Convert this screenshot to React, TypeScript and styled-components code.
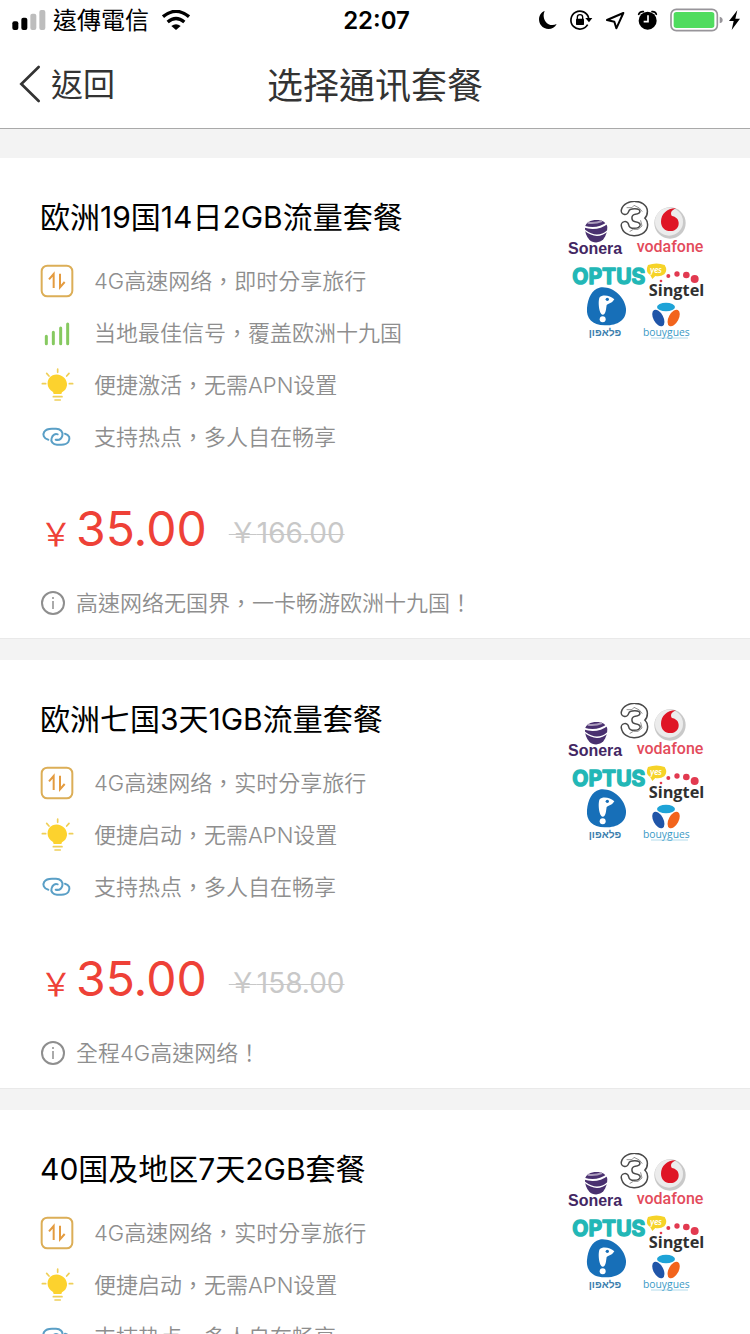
import React from 'react';
import styled, { createGlobalStyle } from 'styled-components';

const GlobalStyle = createGlobalStyle`
  * { box-sizing: border-box; }
  body {
    margin: 0;
    background: #f3f3f3;
    font-family: Inter, "Noto Sans CJK TC", "Noto Sans CJK SC", sans-serif;
  }
  button { font: inherit; color: inherit; }
`;

const Screen = styled.div`
  display: flex;
  flex-direction: column;
  height: 100vh;
`;

const StatusBar = styled.div`
  display: grid;
  grid-template-columns: 1fr auto 1fr;
  align-items: center;
  height: 40px;
  padding: 0 9px 0 12px;
  background: #fff;
  color: #000;
`;

const StatusGroup = styled.div<{ $end?: boolean }>`
  display: flex;
  align-items: center;
  justify-content: ${(p) => (p.$end ? 'flex-end' : 'flex-start')};
  gap: ${(p) => (p.$end ? 12 : 7)}px;
`;

const Carrier = styled.span`
  margin-right: 6px;
  padding-top: 2px;
  font-size: 24px;
  line-height: 38px;
`;

const Clock = styled.time`
  padding-top: 2px;
  font-size: 24px;
  font-weight: 600;
  line-height: 38px;
`;

const Power = styled.div`
  display: flex;
  align-items: center;
  gap: 4px;
`;

const NavBar = styled.header`
  display: grid;
  grid-template-columns: 1fr auto 1fr;
  align-items: center;
  height: 89px;
  padding: 0 19px;
  border-bottom: 1px solid #a9a9a9;
  background: #fff;
  color: #333;
`;

const BackButton = styled.button`
  display: flex;
  align-items: center;
  justify-self: start;
  gap: 9px;
  padding: 0;
  border: 0;
  background: none;
  font-size: 32px;
  line-height: 48px;
`;

const BackLabel = styled.span`
  padding-top: 2px;
`;

const PageTitle = styled.h1`
  margin: 0;
  padding-top: 4px;
  font-size: 36px;
  font-weight: 400;
  line-height: 52px;
`;

const PlanList = styled.main`
  display: flex;
  flex: 1;
  flex-direction: column;
  gap: 22px;
  min-height: 0;
  padding-top: 29px;
  overflow-y: auto;
  scrollbar-width: none;
`;

const Card = styled.article`
  display: flex;
  flex-shrink: 0;
  align-items: flex-start;
  justify-content: space-between;
  padding: 36px 44px 18px 40px;
  background: #fff;
  box-shadow: 0 1px 0 #e9e9e9;
`;

const CardBody = styled.div`
  flex: 1;
  min-width: 0;
`;

const CardTitle = styled.h2`
  margin: 0 0 15px;
  color: #000;
  font-size: 30px;
  font-weight: 400;
  line-height: 46px;
`;

const FeatureList = styled.ul`
  margin: 0;
  padding: 0;
  list-style: none;
`;

const Feature = styled.li`
  display: flex;
  align-items: center;
  gap: 20px;
  height: 52px;
`;

const DetailText = styled.span`
  padding-bottom: 4px;
  color: #8e8e8e;
  font-size: 22px;
  font-weight: 350;
`;

const PriceRow = styled.div`
  display: flex;
  align-items: center;
  gap: 22px;
  height: 64px;
  margin-top: 37px;
`;

const Price = styled.span`
  display: flex;
  align-items: baseline;
  gap: 4px;
  color: #ee4137;
  font-size: 48px;
  line-height: 64px;
`;

const Currency = styled.span`
  font-size: 32px;
`;

const OldPrice = styled.del`
  padding-top: 2px;
  color: #c8c8c8;
  font-size: 28px;
  line-height: 40px;
  text-decoration-thickness: 1px;
`;

const Note = styled.p`
  display: flex;
  align-items: center;
  gap: 11px;
  height: 34px;
  margin: 22px 0 0;
`;

const Partners = styled.svg`
  flex: none;
  margin-top: 7px;
`;

const SignalIcon = () => (
  <svg width="34" height="20" viewBox="35 30 102 60" aria-hidden="true">
    <rect x="36" y="64" width="18" height="26" rx="6" />
    <rect x="63" y="53" width="18" height="37" rx="6" />
    <rect x="90" y="41" width="18" height="49" rx="6" fill="#bdbdbd" />
    <rect x="117" y="30" width="18" height="60" rx="6" fill="#bdbdbd" />
  </svg>
);

const WifiIcon = () => (
  <svg width="28" height="20" viewBox="489 30 84 60" aria-hidden="true">
    <g fill="none" stroke="#000" strokeWidth="10">
      <path d="M492 50 Q531 18 570 50" />
      <path d="M506 66 Q531 45 556 66" />
    </g>
    <path d="M517 78 Q531 67 545 78 L531 90Z" />
  </svg>
);

const MoonIcon = () => (
  <svg width="18" height="20" viewBox="60 30 54 60" aria-hidden="true">
    <path d="M77 33 C60 39 55 61 66 76 C78 92 104 91 113 72 C101 78 87 75 80 65 C73 55 72 43 77 33Z" />
  </svg>
);

const RotationLockIcon = () => (
  <svg width="24" height="22" viewBox="150 27 72 66" aria-hidden="true">
    <path d="M206 74 A27 27 0 1 1 209 54" fill="none" stroke="#000" strokeWidth="5" />
    <path d="M199 54 H220 L210 67Z" />
    <rect x="171" y="56" width="24" height="19" rx="2" />
    <path d="M175 58 V52 a8 8 0 0 1 16 0 V58" fill="none" stroke="#000" strokeWidth="4" />
  </svg>
);

const LocationIcon = () => (
  <svg width="20" height="19" viewBox="258 33 60 57" aria-hidden="true">
    <path d="M313 39 L264 60 L286 65 L292 85Z" fill="none" stroke="#000" strokeWidth="6" strokeLinejoin="round" />
  </svg>
);

const AlarmIcon = () => (
  <svg width="21" height="20" viewBox="354 30 63 60" aria-hidden="true">
    <circle cx="386" cy="62" r="27" />
    <path d="M387 46 V65 H374" fill="none" stroke="#fff" strokeWidth="5" />
    <path d="M359 43 Q363 34 373 35 M399 35 Q409 34 412 43" fill="none" stroke="#000" strokeWidth="5" strokeLinecap="round" />
  </svg>
);

const BatteryIcon = () => (
  <svg width="54" height="24" viewBox="450 26 162 72" aria-hidden="true">
    <rect x="453" y="30" width="139" height="64" rx="16" fill="none" stroke="#98959a" strokeWidth="5" />
    <rect x="461" y="38" width="122" height="48" rx="8" fill="#4fdc5e" />
    <path d="M599 52 Q608 54 608 62 Q608 70 599 72Z" fill="#98959a" />
  </svg>
);

const BoltIcon = () => (
  <svg width="13" height="21" viewBox="624 29 39 63" aria-hidden="true">
    <path d="M652 30 L627 62 H641 L635 89 L660 55 H646Z" />
  </svg>
);

const ChevronIcon = () => (
  <svg width="23" height="38" viewBox="57 194 69 114" aria-hidden="true">
    <path d="M116 200 L64 251 L116 302" fill="none" stroke="#333" strokeWidth="8" strokeLinecap="round" />
  </svg>
);

const InfoIcon = () => (
  <svg width="25" height="25" viewBox="0 0 25 25" aria-hidden="true">
    <circle cx="13" cy="12" r="11" fill="none" stroke="#8e8e8e" strokeWidth="2" />
    <circle cx="13" cy="7" r="1" fill="#8e8e8e" />
    <path d="M13 10 V18" stroke="#8e8e8e" strokeWidth="1.5" />
  </svg>
);

type FeatureKind = 'speed' | 'signal' | 'bulb' | 'link';

const FeatureIcon = ({ kind }: { kind: FeatureKind }) => {
  if (kind === 'speed') {
    return (
      <svg width="34" height="34" viewBox="30 12 102 102" aria-hidden="true">
        <rect x="35" y="17" width="92" height="92" rx="17" fill="none" stroke="#dcae57" strokeWidth="6" />
        <path d="M57 58 L71 42 V84 M90 41 V82 L104 66" fill="none" stroke="#e49b3f" strokeWidth="6" />
      </svg>
    );
  }
  if (kind === 'signal') {
    return (
      <svg width="34" height="34" viewBox="30 18 102 102" aria-hidden="true">
        <path d="M49 79 V101 M70 67 V101 M92 54 V101 M113 42 V101" stroke="#86c960" strokeWidth="9" strokeLinecap="round" />
      </svg>
    );
  }
  if (kind === 'bulb') {
    return (
      <svg width="34" height="34" viewBox="30 174 102 102" aria-hidden="true">
        <path d="M71 252 L69 246 C48 236 47 205 68 196 C90 187 113 205 111 226 C109 237 104 243 96 247 L94 252Z" fill="#fcd22e" />
        <path
          d="M83 177 V187 M50 190 L57 198 M117 190 L110 198 M37 221 H47 M118 221 H128 M70 260 H96 M75 270 H91"
          stroke="#efcf58"
          strokeWidth="5"
          strokeLinecap="round"
        />
      </svg>
    );
  }
  return (
    <svg width="34" height="34" viewBox="30 330 102 102" aria-hidden="true">
      <g fill="none" stroke="#5a9fc6" strokeWidth="6" strokeLinecap="round">
        <path d="M55 389 C41 386 37 374 43 365 C48 357 55 356 66 356 H78 C91 356 100 366 97 377 C94 388 86 391 77 389" />
        <path d="M105 371 C118 374 122 386 115 396 C110 403 104 404 94 404 H81 C69 404 61 394 65 384 C68 374 76 370 83 373" />
      </g>
    </svg>
  );
};

const PartnerLogos = () => (
  <Partners width="140" height="140" viewBox="48 33 420 420" role="img" aria-label="Sonera, 3, vodafone, OPTUS, Singtel, bouygues">
    <path d="M105 112 C106 98 122 90 140 90 C157 90 170 98 172 111 C172 124 168 138 160 148 C150 160 128 160 118 149 C109 139 104 126 105 112Z" fill="#49306f" />
    <path d="M102 110 Q142 122 173 98" fill="none" stroke="#fff" strokeWidth="6" />
    <path d="M104 121 Q142 150 173 122" fill="none" stroke="#fff" strokeWidth="4" />
    <path d="M113 98 Q135 102 156 93" fill="none" stroke="#a99aba" strokeWidth="6" />
    <text x="54" y="192" fontFamily="Liberation Sans, sans-serif" fontWeight="700" fontSize="48" fill="#432663">Sonera</text>

    <g fill="none" strokeLinecap="round" strokeLinejoin="round">
      <path d="M225 62 C231 40 280 39 281 64 C281 78 270 83 257 84 C275 86 284 96 281 109 C275 132 229 133 225 106" stroke="#4a4a4a" strokeWidth="27" />
      <path d="M225 62 C231 40 280 39 281 64 C281 78 270 83 257 84 C275 86 284 96 281 109 C275 132 229 133 225 106" stroke="#fff" strokeWidth="18" />
      <path d="M231 53 L246 53 L252 46 L268 54 L276 64 M272 92 L276 108 L264 118 L250 118 L240 124" stroke="#909090" strokeWidth="3" />
    </g>

    <circle cx="360" cy="99" r="47" fill="#c9c9c9" />
    <circle cx="357" cy="95" r="42" fill="#ececec" />
    <path d="M378 55 C352 54 333 72 333 95 C333 112 345 123 361 123 C378 123 387 111 386 98 C385 84 375 80 365 77 C360 67 366 60 378 55Z" fill="#df1525" />
    <text x="260" y="186" fontFamily="Roboto, sans-serif" fontWeight="500" fontSize="48" fill="#e34b5b">vodafone</text>

    <text x="67" y="281" fontFamily="Inter, sans-serif" fontWeight="700" fontSize="63" fill="#22b7b6" stroke="#22b7b6" strokeWidth="4" strokeLinejoin="round">OPTUS</text>
    <path d="M294 225 Q320 216 344 225 Q354 241 343 253 Q331 261 316 258 L307 267 L301 256 Q284 246 294 225Z" fill="#f6d328" />
    <text x="300" y="248" fontFamily="Lato, sans-serif" fontStyle="italic" fontWeight="700" fontSize="26" fill="#fff">yes</text>

    <g fill="#e23a50">
      <circle cx="333" cy="273" r="4" />
      <circle cx="355" cy="258" r="6" />
      <circle cx="381" cy="252" r="8" />
      <circle cx="409" cy="255" r="10" />
      <circle cx="434" cy="267" r="12" />
    </g>
    <text x="296" y="319" fontFamily="Open Sans, sans-serif" fontWeight="700" fontSize="49" fill="#303030">Singtel</text>

    <path d="M148 293 C187 286 225 322 228 356 C230 391 201 407 164 406 C127 406 108 385 111 354 C114 322 126 299 148 293Z" fill="#176fb8" />
    <path d="M149 322 C157 312 181 316 193 328 C186 340 175 341 170 345 C168 356 168 374 158 374 C147 374 143 333 149 322Z" fill="#fff" />
    <circle cx="172" cy="328" r="5" fill="#176fb8" />
    <circle cx="158" cy="388" r="9" fill="#fff" />
    <text x="165" y="438" textAnchor="middle" fontFamily="Liberation Sans, sans-serif" fontWeight="700" fontSize="31" fill="#3d7fae">פלאפון</text>

    <ellipse cx="348" cy="351" rx="27" ry="13" fill="#1ea3d7" />
    <ellipse cx="325" cy="384" rx="15" ry="27" fill="#2055a8" transform="rotate(-28 325 384)" />
    <ellipse cx="371" cy="384" rx="15" ry="27" fill="#f2641c" transform="rotate(28 371 384)" />
    <text x="279" y="437" fontFamily="Open Sans, sans-serif" fontSize="31" fill="#3a9ac6">bouygues</text>
    <path d="M303 444 H414" stroke="#8bc9e2" strokeWidth="2" />
  </Partners>
);

interface Plan {
  title: string;
  features: { kind: FeatureKind; text: string }[];
  price?: string;
  oldPrice?: string;
  note?: string;
}

const plans: Plan[] = [
  {
    title: '欧洲19国14日2GB流量套餐',
    features: [
      { kind: 'speed', text: '4G高速网络，即时分享旅行' },
      { kind: 'signal', text: '当地最佳信号，覆盖欧洲十九国' },
      { kind: 'bulb', text: '便捷激活，无需APN设置' },
      { kind: 'link', text: '支持热点，多人自在畅享' },
    ],
    price: '35.00',
    oldPrice: '166.00',
    note: '高速网络无国界，一卡畅游欧洲十九国！',
  },
  {
    title: '欧洲七国3天1GB流量套餐',
    features: [
      { kind: 'speed', text: '4G高速网络，实时分享旅行' },
      { kind: 'bulb', text: '便捷启动，无需APN设置' },
      { kind: 'link', text: '支持热点，多人自在畅享' },
    ],
    price: '35.00',
    oldPrice: '158.00',
    note: '全程4G高速网络！',
  },
  {
    title: '40国及地区7天2GB套餐',
    features: [
      { kind: 'speed', text: '4G高速网络，实时分享旅行' },
      { kind: 'bulb', text: '便捷启动，无需APN设置' },
      { kind: 'link', text: '支持热点，多人自在畅享' },
    ],
  },
];

const PlanCard = ({ plan }: { plan: Plan }) => (
  <Card>
    <CardBody>
      <CardTitle>{plan.title}</CardTitle>
      <FeatureList>
        {plan.features.map((f) => (
          <Feature key={f.kind}>
            <FeatureIcon kind={f.kind} />
            <DetailText>{f.text}</DetailText>
          </Feature>
        ))}
      </FeatureList>
      {plan.price && (
        <PriceRow>
          <Price>
            <Currency>￥</Currency>
            {plan.price}
          </Price>
          <OldPrice>￥{plan.oldPrice}</OldPrice>
        </PriceRow>
      )}
      {plan.note && (
        <Note>
          <InfoIcon />
          <DetailText>{plan.note}</DetailText>
        </Note>
      )}
    </CardBody>
    <PartnerLogos />
  </Card>
);

export default function App() {
  return (
    <Screen>
      <GlobalStyle />
      <StatusBar>
        <StatusGroup>
          <SignalIcon />
          <Carrier>遠傳電信</Carrier>
          <WifiIcon />
        </StatusGroup>
        <Clock>22:07</Clock>
        <StatusGroup $end>
          <MoonIcon />
          <RotationLockIcon />
          <LocationIcon />
          <AlarmIcon />
          <Power>
            <BatteryIcon />
            <BoltIcon />
          </Power>
        </StatusGroup>
      </StatusBar>
      <NavBar>
        <BackButton type="button">
          <ChevronIcon />
          <BackLabel>返回</BackLabel>
        </BackButton>
        <PageTitle>选择通讯套餐</PageTitle>
      </NavBar>
      <PlanList>
        {plans.map((plan) => (
          <PlanCard key={plan.title} plan={plan} />
        ))}
      </PlanList>
    </Screen>
  );
}
